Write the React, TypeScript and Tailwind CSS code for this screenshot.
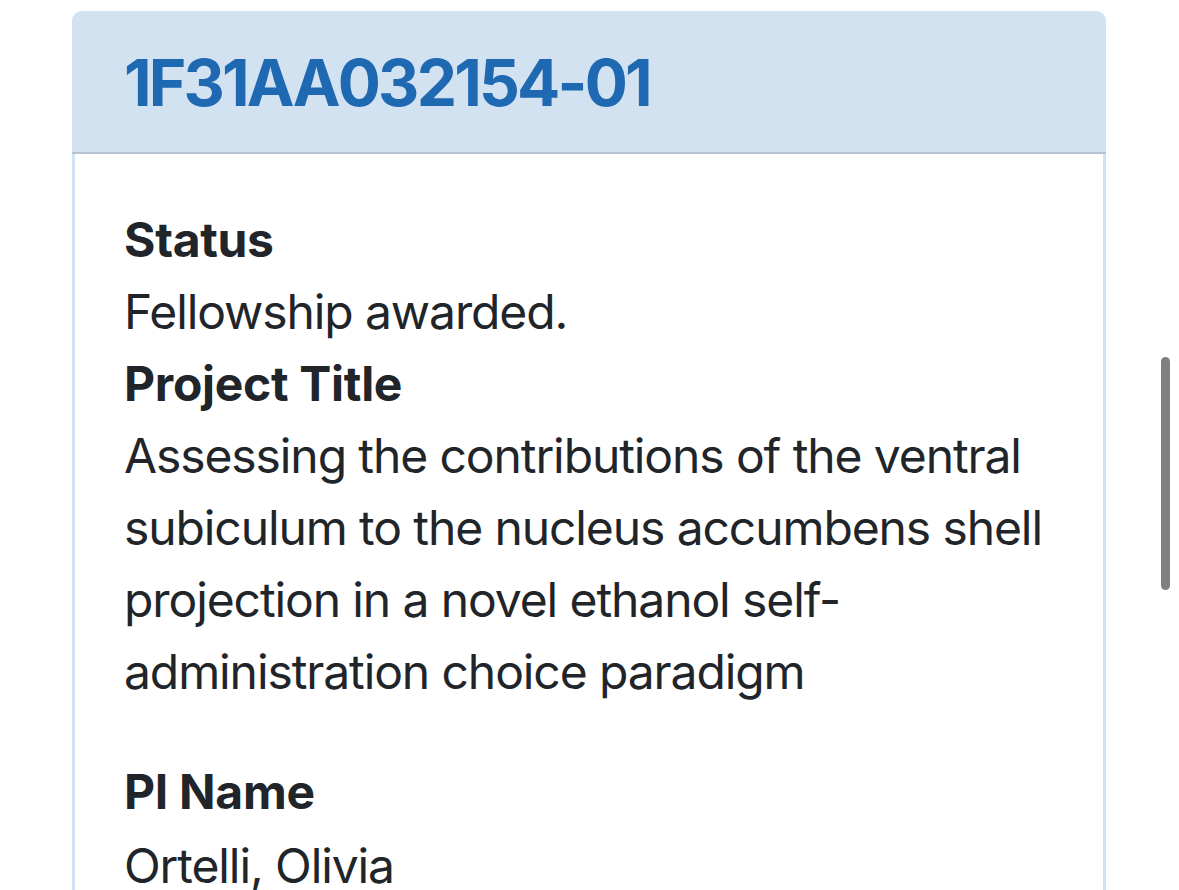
const titleLines = [
  "Assessing the contributions of the ventral",
  "subiculum to the nucleus accumbens shell",
  "projection in a novel ethanol self-",
  "administration choice paradigm",
];

export default function App() {
  const font = { fontFamily: 'Inter, "Noto Sans", sans-serif' };
  return (
    <div className="relative h-[890px] w-[1179px] overflow-hidden bg-white" style={font}>
      <div className="ml-[72px] mt-[11px] w-[1034px] rounded-t-[10px] border-x-[3px] border-t-0 border-[#d2e2f1]">
        <div className="-mx-[3px] flex h-[143px] items-center rounded-t-[10px] border-b-2 border-[#b5c4d3] bg-[#d2e2f1] pl-[52px] pt-[2px]">
          <h1 className="text-[64px] font-bold leading-none tracking-[-2.8px] text-[#1f69b3]">
            1F31AA032154-01
          </h1>
        </div>
        <div className="px-[49px] pt-[50px] text-[48px] leading-[72px] tracking-[-1.1px] text-[#212529]">
          <div className="font-bold tracking-[-0.3px]">Status</div>
          <div>Fellowship awarded.</div>
          <div className="font-bold tracking-[-0.3px]">Project Title</div>
          <div className="mb-[48px]">
            {titleLines.map((line) => (
              <div key={line} className="whitespace-nowrap">
                {line}
              </div>
            ))}
          </div>
          <div className="font-bold tracking-[-0.3px]">PI Name</div>
          <div className="pt-[2px]">Ortelli, Olivia</div>
        </div>
      </div>
      {/* scroll indicator */}
      <div className="absolute left-[1161px] top-[357px] h-[233px] w-[9px] rounded-full bg-[#808080]" />
    </div>
  );
}
